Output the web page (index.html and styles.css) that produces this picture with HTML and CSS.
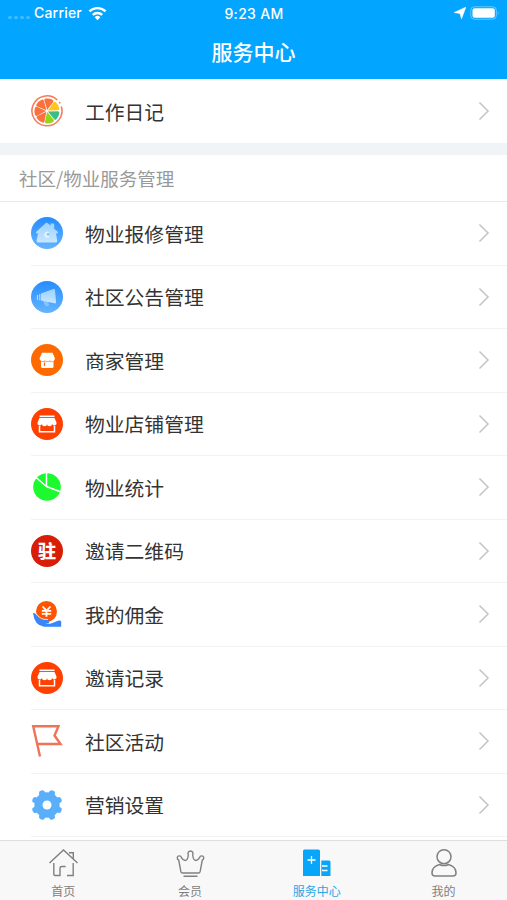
FILE: index.html
```html
<!DOCTYPE html>
<html lang="zh-CN">
<head>
    <meta charset="UTF-8">
    <meta name="viewport" content="width=device-width, initial-scale=1.0">
    <title>服务中心</title>
    <link rel="stylesheet" href="styles.css">
</head>
<body>
    <!-- 公用图标 -->
    <svg class="symbols">
        <symbol id="arrow" viewBox="0 0 12 20">
            <path d="M1.500 1.500 10 10l-8.500 8.500" fill="none" stroke="#c4c4c6" stroke-width="1.500"/>
        </symbol>
        <symbol id="shop" viewBox="0 0 32 32">
            <circle cx="16" cy="16" r="16" fill="#ff4001"/>
            <path d="M8.500 8.300h15" stroke="#fff" stroke-width="1.600"/>
            <path d="M8.500 10h15l2 4.500a2.300 2.300 0 0 1-4.500 1.300 2.500 2.500 0 0 1-5 0 2.500 2.500 0 0 1-5 0 2.300 2.300 0 0 1-4.500-1.300z" fill="#fff"/>
            <path d="M8.500 18v5.800h15V18" fill="none" stroke="#fff" stroke-width="1.500"/>
        </symbol>
    </svg>

    <div class="app">
        <header class="header">
            <div class="status">
                <div class="status-left">
                    <span class="signal"><i></i><i></i><i></i><i></i></span>
                    <span class="carrier">Carrier</span>
                    <svg class="wifi" viewBox="0 0 20 15" fill="none" stroke="#fff" stroke-width="2.500">
                        <path d="M1.500 5.300a12.200 12.200 0 0 1 17 0"/>
                        <path d="M5 9a7.200 7.200 0 0 1 10 0"/>
                        <path d="M10 14.500 7 11.400a4.300 4.300 0 0 1 6 0z" fill="#fff" stroke="none"/>
                    </svg>
                </div>
                <span class="time">9:23 AM</span>
                <div class="status-right">
                    <svg class="location" viewBox="0 0 12 12"><path d="M11.800.2 7.500 11.800 6 6.500 .2 5.500z" fill="#fff" stroke="#fff" stroke-width=".6"/></svg>
                    <svg class="battery" viewBox="0 0 30 14">
                        <rect x=".8" y=".8" width="25.500" height="12.400" rx="3.500" fill="none" stroke="#fff" stroke-opacity=".4"/>
                        <rect x="2.500" y="2.300" width="22.300" height="9.400" rx="2" fill="#fff"/>
                        <path d="M27.800 5q1.500 2 0 4z" fill="#fff" fill-opacity=".5"/>
                    </svg>
                </div>
            </div>
            <h1 class="title">服务中心</h1>
        </header>

        <main class="content">
            <div class="row row-diary">
                <svg class="icon" viewBox="0 0 32 32">
                    <path d="M26.300 5A15 15 0 1 0 30.300 11.500" fill="none" stroke="#f37b59" stroke-width="1.500"/>
                    <circle cx="28.700" cy="7.700" r=".9" fill="#f37b59"/>
                    <g transform="translate(16 16)">
                        <path id="slice" d="M0-1-4.500-10Q-5-11.500-3.500-12Q0-13.200 3.500-12 5-11.500 4.500-10z" fill="#fb713d" transform="rotate(10)"/>
                        <use href="#slice" transform="rotate(-51)"/>
                        <use href="#slice" transform="rotate(-102)"/>
                        <path d="M0-1-4.500-10Q-5-11.500-3.500-12Q0-13.200 3.500-12 5-11.500 4.500-10z" fill="#ffc71d" transform="rotate(62)"/>
                        <path d="M0-1-4.500-10Q-5-11.500-3.500-12Q0-13.200 3.500-12 5-11.500 4.500-10z" fill="#3dbd85" transform="rotate(115)"/>
                        <path d="M0-1-4.500-10Q-5-11.500-3.500-12Q0-13.200 3.500-12 5-11.500 4.500-10z" fill="#92d51b" transform="rotate(167)"/>
                        <use href="#slice" transform="rotate(-152)"/>
                    </g>
                </svg>
                <span class="label">工作日记</span>
                <svg class="arrow"><use href="#arrow"/></svg>
            </div>

            <div class="divider"></div>
            <h2 class="section-title">社区/物业服务管理</h2>

            <div class="list">
                <div class="row">
                    <svg class="icon" viewBox="0 0 32 32">
                        <defs>
                            <linearGradient id="blue" x1="0" y1="0" x2="0" y2="1"><stop stop-color="#258cff"/><stop offset="1" stop-color="#65b5ff"/></linearGradient>
                            <linearGradient id="pale" x1="0" y1="0" x2="0" y2="1"><stop stop-color="#9bd2ff"/><stop offset="1" stop-color="#c8e6ff"/></linearGradient>
                        </defs>
                        <circle cx="16" cy="16" r="16" fill="url(#blue)"/>
                        <path d="M14.800 6q.9-.7 1.800 0l2.900 2.500V6.500h3.700v5.300l3.500 3q.8 1.500-1 1.700h-.7l1.300 7.600q-.2 1.500-1.800 1.500h-17q-2 0-2-1.500L7 16.500h-.7q-2-.1-1-1.700z" fill="url(#pale)"/>
                        <path d="M18 15.200a3 3 0 1 0 .8 4l-2.300-1z" fill="#e2f3ff"/>
                        <circle cx="17" cy="17.300" r="1.200" fill="#7cc3ff"/>
                    </svg>
                    <span class="label">物业报修管理</span>
                    <svg class="arrow"><use href="#arrow"/></svg>
                </div>
                <div class="row">
                    <svg class="icon" viewBox="0 0 32 32">
                        <circle cx="16" cy="16" r="16" fill="url(#blue)"/>
                        <path d="M12 20h5l1.200 4.500q-2 1.300-4 .3z" fill="#83c5ff"/>
                        <path d="M10 12.500 22.500 8q1.500-.3 1.500 1l1 12.300q0 1.500-1.500 1L10 19.500z" fill="url(#pale)"/>
                        <path d="M6.500 14v5M8.800 13v6.500" stroke="#a9d8ff" stroke-width="1.300"/>
                    </svg>
                    <span class="label">社区公告管理</span>
                    <svg class="arrow"><use href="#arrow"/></svg>
                </div>
                <div class="row">
                    <svg class="icon" viewBox="0 0 32 32">
                        <circle cx="16" cy="16" r="16" fill="#ff6a00"/>
                        <path d="M11 8.700h10.500l2.300 5.300v1.500q-1 1.700-2.500 1.700T18.800 16q-1 1.200-2.500 1.200T13.700 16q-1 1.200-2.500 1.200T8.700 15.500V14z" fill="#fff"/>
                        <path d="M10 16.500h12.500v6q0 1.500-1.500 1.500h-9.500Q10 24 10 22.500z" fill="#fff"/>
                        <path d="M10 17.600h12.500" stroke="#ff6a00" stroke-width=".6"/>
                        <path d="M13.500 18.500v3.500" stroke="#ff6a00" stroke-width="1.200"/>
                    </svg>
                    <span class="label">商家管理</span>
                    <svg class="arrow"><use href="#arrow"/></svg>
                </div>
                <div class="row">
                    <svg class="icon"><use href="#shop"/></svg>
                    <span class="label">物业店铺管理</span>
                    <svg class="arrow"><use href="#arrow"/></svg>
                </div>
                <div class="row">
                    <svg class="icon" viewBox="0 0 32 32">
                        <circle cx="16" cy="16" r="13.800" fill="#1cf92f"/>
                        <path d="M15.500 1v14.500M4 5.500l11.500 10L30 21" fill="none" stroke="#fff" stroke-width="1.500"/>
                    </svg>
                    <span class="label">物业统计</span>
                    <svg class="arrow"><use href="#arrow"/></svg>
                </div>
                <div class="row">
                    <span class="icon badge">驻</span>
                    <span class="label">邀请二维码</span>
                    <svg class="arrow"><use href="#arrow"/></svg>
                </div>
                <div class="row">
                    <svg class="icon" viewBox="0 0 32 32">
                        <circle cx="15.500" cy="13.500" r="10.500" fill="#ff5500"/>
                        <path d="m11.500 8.500 4 4.200 4-4.200M10.800 12.900h9.400M10.800 15.900h9.400M15.500 12.500v6.200" fill="none" stroke="#fff" stroke-width="1.800"/>
                        <path d="M2 15.300q1.500-.8 2.700.8 3.100 4.500 7.100 5.700l5 .3q2.500.8 1 3l-3.500.5 5 .2 8.500-3.200q2.200-.3 2.400 1.200v4.900H13Q3.700 27.800 2 15.300z" fill="#3687fc"/>
                        <path d="M5 15.500q3 4.500 7 5.700l5 .3" fill="none" stroke="#fff" stroke-width=".8"/>
                    </svg>
                    <span class="label">我的佣金</span>
                    <svg class="arrow"><use href="#arrow"/></svg>
                </div>
                <div class="row">
                    <svg class="icon"><use href="#shop"/></svg>
                    <span class="label">邀请记录</span>
                    <svg class="arrow"><use href="#arrow"/></svg>
                </div>
                <div class="row">
                    <svg class="icon" viewBox="0 0 32 32">
                        <path d="M9 31.500 2.200 1.200h25.300L23.500 10.500l6 8.500H6.300" fill="none" stroke="#ef7359" stroke-width="2.400"/>
                    </svg>
                    <span class="label">社区活动</span>
                    <svg class="arrow"><use href="#arrow"/></svg>
                </div>
                <div class="row">
                    <svg class="icon" viewBox="0 0 32 32">
                        <g fill="#5aaffa" transform="translate(16 16)">
                            <circle r="12.700"/>
                            <g id="teeth"><rect x="-3" y="-15.500" width="6" height="31" rx="2.500" transform="rotate(22.500)"/><rect x="-3" y="-15.500" width="6" height="31" rx="2.500" transform="rotate(67.500)"/></g>
                            <use href="#teeth" transform="rotate(90)"/>
                            <circle r="4.500" fill="#fff"/>
                        </g>
                    </svg>
                    <span class="label">营销设置</span>
                    <svg class="arrow"><use href="#arrow"/></svg>
                </div>
            </div>
        </main>

        <nav class="tabbar">
            <div class="tab">
                <svg class="tab-icon" viewBox="0 0 30 30" fill="none" stroke="#808080" stroke-width="1.400">
                    <path d="M1.500 15 15.500 2l14 13M21 4.700h4.300v5.800M5.800 15v11q0 1.500 1.500 1.500H12v-7.300q0-1.700 1.700-1.700h4M25.200 15v12.500H19"/>
                </svg>
                <span>首页</span>
            </div>
            <div class="tab">
                <svg class="tab-icon" viewBox="0 0 30 30" fill="none" stroke="#808080" stroke-width="1.400" stroke-linejoin="round">
                    <path d="M7.500 25h16q1.300 0 1.600-1.300L27.300 12a2.100 2.100 0 1 0-2.700-2.300Q23 12.500 20.800 12.500 18 12 17.700 6.700a2.500 2.500 0 1 0-4.400 0Q13 12 10.200 12.500 8 12.500 6.400 9.700A2.100 2.100 0 1 0 3.700 12l2.200 11.700Q6.200 25 7.500 25zM8.500 28.300h14"/>
                </svg>
                <span>会员</span>
            </div>
            <div class="tab active">
                <svg class="tab-icon" viewBox="0 0 30 30">
                    <path d="M2.500 1.500h14q1.500 0 1.500 1.500v25H1V3q0-1.500 1.500-1.500zM19.300 12.500h7.700q1.500 0 1.500 1.500v14h-9.200z" fill="#08a6fb"/>
                    <path d="M9.500 8v8M5.500 12h8M20 18h5.500M20 22.500h5.500" stroke="#fff" stroke-width="1.300"/>
                </svg>
                <span>服务中心</span>
            </div>
            <div class="tab">
                <svg class="tab-icon" viewBox="0 0 30 30" fill="none" stroke="#808080" stroke-width="1.500">
                    <circle cx="15" cy="8.700" r="7"/>
                    <path d="M10.500 16.500Q3 18.500 3 25q0 3 3 3h18q3 0 3-3 0-6.500-7.500-8.500-4.500 2.200-9 0z"/>
                </svg>
                <span>我的</span>
            </div>
        </nav>
    </div>
</body>
</html>
```

FILE: styles.css
```css
* {
    margin: 0;
    padding: 0;
    box-sizing: border-box;
}

body {
    font-family: "Noto Sans CJK SC", sans-serif;
    background: #fff;
    color: #333;
}

svg {
    display: block;
    flex-shrink: 0;
}

.symbols {
    width: 0;
    height: 0;
    display: none;
}

.app {
    display: flex;
    flex-direction: column;
    height: 900px;
    overflow: hidden;
}

/* 顶部 */
.header {
    height: 79px;
    flex-shrink: 0;
    background: #02a5ff;
    color: #fff;
}

.status {
    display: grid;
    grid-template-columns: 1fr auto 1fr;
    align-items: center;
    height: 26px;
    padding: 0 7px 0 8px;
    font-family: Inter, sans-serif;
    font-size: 14px;
}

.status-left,
.status-right {
    display: flex;
    align-items: center;
}

.status-right {
    justify-content: flex-end;
    gap: 4px;
}

.signal {
    display: flex;
    gap: 2px;
    width: 26px;
    padding-top: 8px;
}

.signal i {
    width: 4px;
    height: 3px;
    border-radius: 2px;
    background: rgba(255,255,255,0.25);
}

.carrier {
    width: 54px;
    font-weight: 500;
    line-height: 16px;
    margin-top: -1px;
    letter-spacing: 0.2px;
}

.wifi {
    width: 19px;
    height: 15px;
}

.time {
    font-size: 14px;
    font-weight: 500;
    letter-spacing: 0.3px;
}

.location {
    width: 12px;
    height: 12px;
}

.battery {
    width: 30px;
    height: 14px;
}

.title {
    font-size: 21px;
    font-weight: 500;
    line-height: 50px;
    text-align: center;
}

/* 列表 */
.content {
    flex: 1;
    min-height: 0;
}

.row {
    display: flex;
    align-items: center;
    height: 63.5px;
    margin-left: 31px;
    padding-right: 17px;
    border-bottom: 1px solid #f2f2f2;
}

.row-diary {
    height: 64px;
    border-bottom: none;
}

.icon {
    width: 32px;
    height: 32px;
    flex-shrink: 0;
}

.label {
    flex: 1;
    margin-left: 22px;
    padding-top: 1px;
    font-size: 19.8px;
    line-height: 30px;
}

.arrow {
    width: 12px;
    height: 20px;
}

.badge {
    border-radius: 50%;
    background: #d81e06;
    color: #fff;
    font-size: 18px;
    font-weight: 900;
    line-height: 31px;
    text-align: center;
}

.divider {
    height: 12px;
    background: #f1f4f6;
}

.section-title {
    height: 47px;
    padding-left: 19px;
    border-bottom: 1px solid #e9e9e9;
    font-size: 18.5px;
    font-weight: 400;
    line-height: 46px;
    color: #999;
}

/* 底部导航 */
.tabbar {
    display: flex;
    height: 60px;
    flex-shrink: 0;
    padding-top: 7px;
    background: #f8f8f8;
    border-top: 1px solid #dedede;
}

.tab {
    display: flex;
    flex: 1;
    flex-direction: column;
    align-items: center;
    font-size: 12px;
    line-height: 18px;
    color: #808080;
}

.tab-icon {
    width: 30px;
    height: 30px;
    margin-bottom: 4px;
}

.active {
    color: #2ba5e5;
}
```
